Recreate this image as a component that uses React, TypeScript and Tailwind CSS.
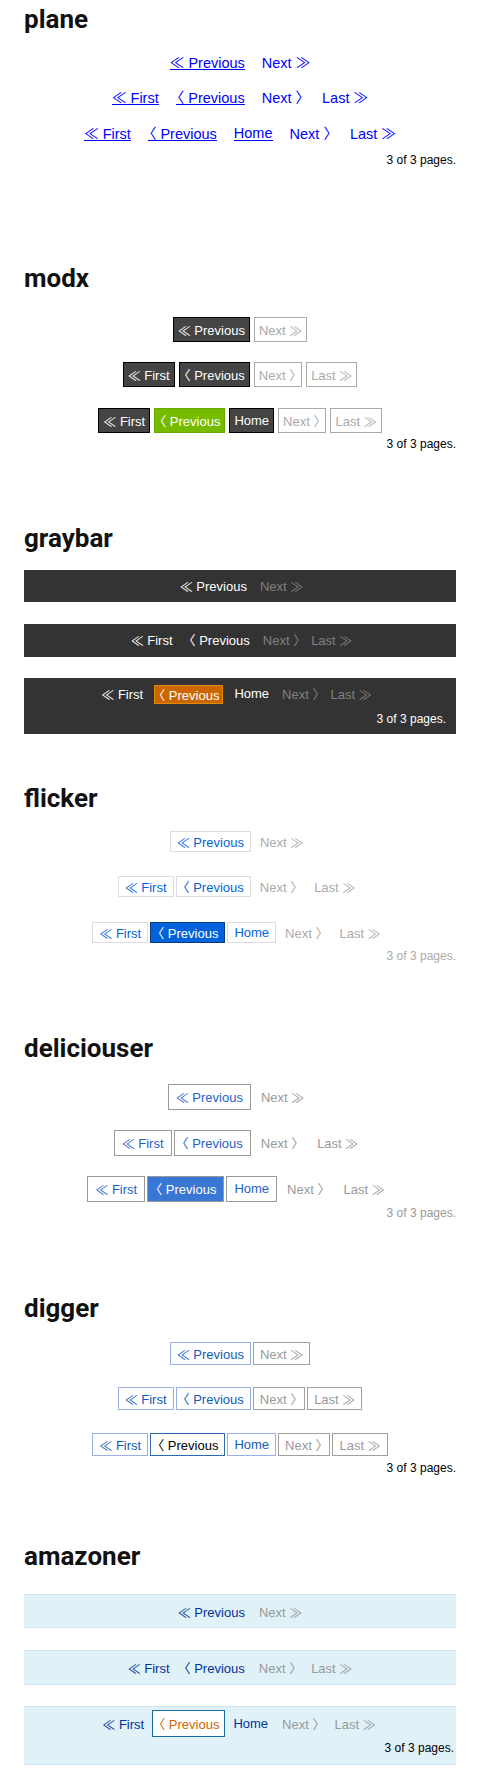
import React from 'react'

type Kind = 'link' | 'current' | 'off'
type Mark = 'dl' | 'l' | 'r' | 'dr'
type Item = { label: string; pre?: Mark; post?: Mark; kind: Kind }
type Styles = { row: string; link: string; current: string; off: string }

const ROW1: Item[] = [
  { label: 'Previous', pre: 'dl', kind: 'link' },
  { label: 'Next', post: 'dr', kind: 'off' },
]
const ROW2: Item[] = [
  { label: 'First', pre: 'dl', kind: 'link' },
  { label: 'Previous', pre: 'l', kind: 'link' },
  { label: 'Next', post: 'r', kind: 'off' },
  { label: 'Last', post: 'dr', kind: 'off' },
]
const ROW3: Item[] = [
  { label: 'First', pre: 'dl', kind: 'link' },
  { label: 'Previous', pre: 'l', kind: 'current' },
  { label: 'Home', kind: 'link' },
  { label: 'Next', post: 'r', kind: 'off' },
  { label: 'Last', post: 'dr', kind: 'off' },
]

const cjk = "font-['Noto_Sans_CJK_JP',sans-serif]"

function Glyph({ m }: { m: Mark }) {
  if (m === 'dl') return <span className={cjk}>≪</span>
  if (m === 'dr') return <span className={cjk}>≫</span>
  if (m === 'l') return <span className={`${cjk} ml-[-6px]`}>〈</span>
  return <span className={`${cjk} mr-[-5px]`}>〉</span>
}

function Row({ items, s, className = '' }: { items: Item[]; s: Styles; className?: string }) {
  return (
    <div className={`${s.row} ${className}`}>
      {items.map((it) => {
        const body = (
          <>
            {it.pre && <Glyph m={it.pre} />}
            {it.pre && ' '}
            {it.label}
            {it.post && ' '}
            {it.post && <Glyph m={it.post} />}
          </>
        )
        if (it.kind === 'off') return <span key={it.label} className={`whitespace-nowrap ${s.off}`}>{body}</span>
        if (it.kind === 'current') return <span key={it.label} className={`whitespace-nowrap ${s.current}`}>{body}</span>
        return <a key={it.label} href="#" className={`whitespace-nowrap ${s.link}`}>{body}</a>
      })}
    </div>
  )
}

const plane: Styles = {
  row: 'flex justify-center gap-[17px] h-[16px] leading-[16px] text-[14.5px]',
  link: 'block h-[16px] pb-[1px] text-[#0000ff] border-b border-current',
  current: 'block h-[16px] pb-[1px] text-[#0000ff] border-b border-current',
  off: 'block text-[#0000ff]',
}

const modx: Styles = {
  row: 'flex justify-center gap-[4px]',
  link: 'block h-[25px] leading-[23px] px-[4px] border border-black bg-[#444] text-white',
  current: 'block h-[25px] leading-[23px] px-[4px] border border-[#66aa00] bg-[#77bb00] text-white',
  off: 'block h-[25px] leading-[23px] px-[4px] border border-[#aaa] text-[#aaa]',
}

const graybar: Styles = {
  row: 'flex justify-center items-center gap-[6px] h-[16px] leading-[16px]',
  link: 'block px-[4px] border border-transparent text-white',
  current: 'block h-[19px] leading-[17px] px-[3px] border border-[#e08a00] bg-[#cc6600] text-white',
  off: 'block px-[2px] text-[#808080]',
}

const flicker: Styles = {
  row: 'flex justify-center gap-[2px]',
  link: 'block h-[21px] leading-[19px] px-[6px] border border-[#dddddd] text-[#0063dc]',
  current: 'block h-[21px] leading-[19px] px-[6px] border border-[#0a3b7a] bg-[#0063dc] text-white',
  off: 'block h-[21px] leading-[19px] px-[6px] border border-transparent text-[#aaa]',
}

const delicious: Styles = {
  row: 'flex justify-center gap-[2px]',
  link: 'block h-[26px] leading-[24px] px-[7px] border border-[#999] text-[#1f5fc8]',
  current: 'block h-[26px] leading-[24px] px-[7px] border border-[#999] bg-[#3a76d3] text-white',
  off: 'block h-[26px] leading-[24px] px-[7px] border border-transparent text-[#999]',
}

const digger: Styles = {
  row: 'flex justify-center gap-[2px]',
  link: 'block h-[23px] leading-[21px] px-[6px] border border-[#9aafe5] text-[#105cb6]',
  current: 'block h-[23px] leading-[21px] px-[6px] border border-[#2e6ab1] text-black',
  off: 'block h-[23px] leading-[21px] px-[6px] border border-[#a0a0a0] text-[#999]',
}

const amazoner: Styles = {
  row: 'flex justify-center gap-[2px] h-[27px]',
  link: 'block h-[27px] leading-[25px] px-[5px] border border-transparent text-[#003399]',
  current: 'block h-[27px] leading-[25px] px-[5px] border border-[#1a6aa0] bg-white text-[#cc6600]',
  off: 'block h-[27px] leading-[25px] px-[5px] border border-transparent text-[#999]',
}

const H = "font-['Roboto',sans-serif] font-bold text-[26px] leading-[30px] text-[#111]"
const P = 'text-right text-[12px] leading-[16px]'

export default function App() {
  return (
    <div className="min-h-[1792px] bg-white px-[24px] pt-[4px] font-['Liberation_Sans','Noto_Sans_CJK_JP',sans-serif] text-[13px] text-black">
      {/* plane */}
      <h2 className={H}>plane</h2>
      <Row items={ROW1} s={plane} className="mt-[20px]" />
      <Row items={ROW2} s={plane} className="mt-[19px]" />
      <Row items={ROW3} s={plane} className="mt-[20px]" />
      <p className={`${P} mt-[11px]`}>3 of 3 pages.</p>

      {/* modx */}
      <h2 className={`${H} mt-[95px]`}>modx</h2>
      <Row items={ROW1} s={modx} className="mt-[24px]" />
      <Row items={ROW2} s={modx} className="mt-[20px]" />
      <Row items={ROW3} s={modx} className="mt-[21px]" />
      <p className={`${P} mt-[3px]`}>3 of 3 pages.</p>

      {/* graybar */}
      <h2 className={`${H} mt-[71px]`}>graybar</h2>
      <div className="mt-[17px] bg-[#333] pt-[8px] pb-[8px]">
        <Row items={ROW1} s={graybar} />
      </div>
      <div className="mt-[22px] bg-[#333] pt-[8px] pb-[9px]">
        <Row items={ROW2} s={graybar} />
      </div>
      <div className="mt-[21px] bg-[#333] pt-[8px] pb-[7px] pr-[10px]">
        <Row items={ROW3} s={graybar} />
        <p className={`${P} mt-[9px] text-white`}>3 of 3 pages.</p>
      </div>

      {/* flicker */}
      <h2 className={`${H} mt-[49px]`}>flicker</h2>
      <Row items={ROW1} s={flicker} className="mt-[18px]" />
      <Row items={ROW2} s={flicker} className="mt-[24px]" />
      <Row items={ROW3} s={flicker} className="mt-[25px]" />
      <p className={`${P} mt-[5px] text-[#aaa]`}>3 of 3 pages.</p>

      {/* deliciouser */}
      <h2 className={`${H} mt-[69px]`}>deliciouser</h2>
      <Row items={ROW1} s={delicious} className="mt-[21px]" />
      <Row items={ROW2} s={delicious} className="mt-[20px]" />
      <Row items={ROW3} s={delicious} className="mt-[20px]" />
      <p className={`${P} mt-[3px] text-[#999]`}>3 of 3 pages.</p>

      {/* digger */}
      <h2 className={`${H} mt-[72px]`}>digger</h2>
      <Row items={ROW1} s={digger} className="mt-[19px]" />
      <Row items={ROW2} s={digger} className="mt-[22px]" />
      <Row items={ROW3} s={digger} className="mt-[23px]" />
      <p className={`${P} mt-[4px]`}>3 of 3 pages.</p>

      {/* amazoner */}
      <h2 className={`${H} mt-[65px]`}>amazoner</h2>
      <div className="mt-[23px] bg-[#e1f1f8] border-y border-[#cde6f2] pt-[3px] pb-[2px]">
        <Row items={ROW1} s={amazoner} />
      </div>
      <div className="mt-[22px] bg-[#e1f1f8] border-y border-[#cde6f2] py-[3px]">
        <Row items={ROW2} s={amazoner} />
      </div>
      <div className="mt-[21px] bg-[#e1f1f8] border-y border-[#cde6f2] pt-[3px] pb-[8px] pr-[2px]">
        <Row items={ROW3} s={amazoner} />
        <p className={`${P} mt-[3px]`}>3 of 3 pages.</p>
      </div>
    </div>
  )
}
